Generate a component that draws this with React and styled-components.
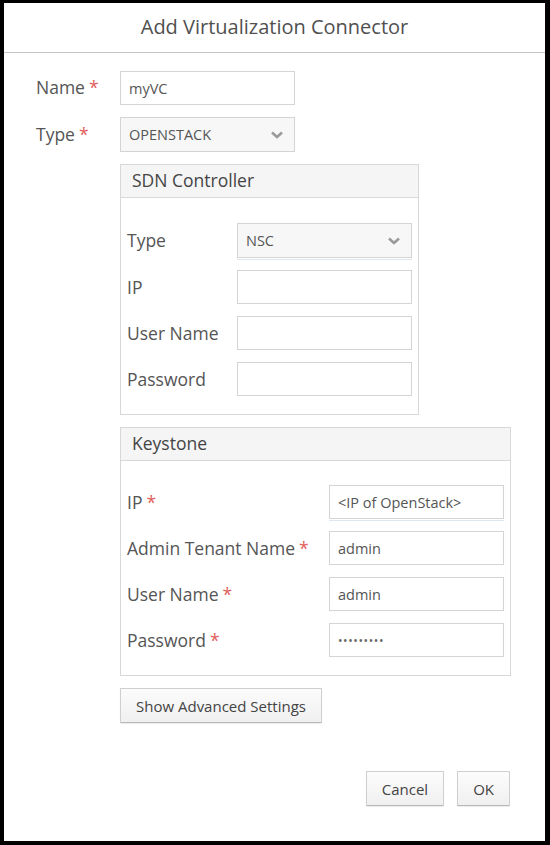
import React from "react";
import styled, { createGlobalStyle } from "styled-components";

const Global = createGlobalStyle`
  html, body { margin: 0; padding: 0; background: #000; }
  body { font-family: "Open Sans", "Noto Sans", sans-serif; -webkit-font-smoothing: antialiased; }
  * { box-sizing: border-box; }
`;

const Page = styled.div`
  width: 550px;
  height: 845px;
  padding: 3px 5px 4px 4px;
  background: #000;
`;

const Dialog = styled.div`
  width: 541px;
  height: 838px;
  background: #fff;
  display: flex;
  flex-direction: column;
`;

const Header = styled.div`
  height: 50px;
  border-bottom: 1px solid #c4c4c4;
  display: flex;
  align-items: center;
  justify-content: center;
  font-size: 20px;
  color: #505050;
  padding-bottom: 2px;
`;

const Body = styled.div`
  padding: 18px 35px 0 32px;
  display: flex;
  flex-direction: column;
  gap: 12px;
  flex: 1;
`;

const Row = styled.div`
  display: flex;
  align-items: center;
`;

const Label = styled.div`
  width: ${(p) => p.$w}px;
  flex: none;
  font-size: 17.5px;
  color: #555;
  padding-bottom: ${(p) => p.$pb || 0}px;
  white-space: nowrap;
`;

const Star = styled.span`
  color: #e0605c;
  margin-left: 4px;
`;

const Field = styled.div`
  width: ${(p) => p.$w}px;
  height: ${(p) => p.$h || 34}px;
  border: 1px solid #d4d4d4;
  background: ${(p) => (p.$select ? "#f7f7f7" : "#fff")};
  display: flex;
  align-items: center;
  justify-content: space-between;
  padding: 0 10px 0 8px;
  font-size: 14.5px;
  color: #555;
  box-shadow: ${(p) => (p.$underline ? "0 1px 0 #fff, 0 2px 0 #dfe6ee" : "none")};
`;

const Dots = styled.span`
  letter-spacing: 0.6px;
  font-size: 12px;
  color: #666;
`;

const Panel = styled.div`
  margin-left: 84px;
  width: ${(p) => p.$w}px;
  border: 1px solid #d8d8d8;
`;

const PanelHead = styled.div`
  height: 33px;
  background: #f5f5f5;
  border-bottom: 1px solid #d8d8d8;
  font-size: 17.5px;
  color: #444;
  display: flex;
  align-items: center;
  padding: 0 11px 2px;
`;

const PanelBody = styled.div`
  padding: ${(p) => p.$pt}px 6px 18px 6px;
  display: flex;
  flex-direction: column;
  gap: 12px;
`;

const Button = styled.button`
  font-family: "Open Sans", "Noto Sans", sans-serif;
  height: 35px;
  padding: 0 ${(p) => p.$px || 15}px;
  font-size: 15px;
  color: #444;
  background: linear-gradient(#fcfcfc, #f0f0f0);
  border: 1px solid #cfcfcf;
  border-bottom-color: #b8b8b8;
  border-radius: 1px;
  box-shadow: 0 1px 1px rgba(0, 0, 0, 0.08);
  cursor: pointer;
`;

const AdvRow = styled.div`
  margin-left: 84px;
  display: flex;
`;

const Footer = styled.div`
  display: flex;
  justify-content: flex-end;
  gap: 13px;
  padding: 36px 0 0;
`;

const Chevron = () => (
  <svg width="14" height="10" viewBox="0 0 14 10">
    <path d="M2 2.5 L7 7 L12 2.5" fill="none" stroke="#9a9a9a" strokeWidth="2.6" />
  </svg>
);

const Req = ({ children }) => (
  <>
    {children}
    <Star>*</Star>
  </>
);

export default function App() {
  return (
    <>
      <Global />
      <Page>
        <Dialog>
          <Header>Add Virtualization Connector</Header>
          <Body>
            <Row>
              <Label $w={84} $pb={2}>
                <Req>Name</Req>
              </Label>
              <Field $w={175}>myVC</Field>
            </Row>
            <Row>
              <Label $w={84} $pb={2}>
                <Req>Type</Req>
              </Label>
              <Field $w={175} $h={35} $select>
                OPENSTACK
                <Chevron />
              </Field>
            </Row>
            <Panel $w={299}>
              <PanelHead>SDN Controller</PanelHead>
              <PanelBody $pt={25}>
                <Row>
                  <Label $w={110} $pb={2}>Type</Label>
                  <Field $w={175} $h={35} $select $underline>
                    NSC
                    <Chevron />
                  </Field>
                </Row>
                <Row>
                  <Label $w={110}>IP</Label>
                  <Field $w={175} />
                </Row>
                <Row>
                  <Label $w={110}>User Name</Label>
                  <Field $w={175} />
                </Row>
                <Row>
                  <Label $w={110}>Password</Label>
                  <Field $w={175} />
                </Row>
              </PanelBody>
            </Panel>
            <Panel $w={391}>
              <PanelHead>Keystone</PanelHead>
              <PanelBody $pt={24}>
                <Row>
                  <Label $w={202}>
                    <Req>IP</Req>
                  </Label>
                  <Field $w={175} $underline>&lt;IP of OpenStack&gt;</Field>
                </Row>
                <Row>
                  <Label $w={202}>
                    <Req>Admin Tenant Name</Req>
                  </Label>
                  <Field $w={175}>admin</Field>
                </Row>
                <Row>
                  <Label $w={202}>
                    <Req>User Name</Req>
                  </Label>
                  <Field $w={175}>admin</Field>
                </Row>
                <Row>
                  <Label $w={202}>
                    <Req>Password</Req>
                  </Label>
                  <Field $w={175}>
                    <Dots>•••••••••</Dots>
                  </Field>
                </Row>
              </PanelBody>
            </Panel>
            <AdvRow>
              <Button>Show Advanced Settings</Button>
            </AdvRow>
            <Footer>
              <Button>Cancel</Button>
              <Button>OK</Button>
            </Footer>
          </Body>
        </Dialog>
      </Page>
    </>
  );
}
